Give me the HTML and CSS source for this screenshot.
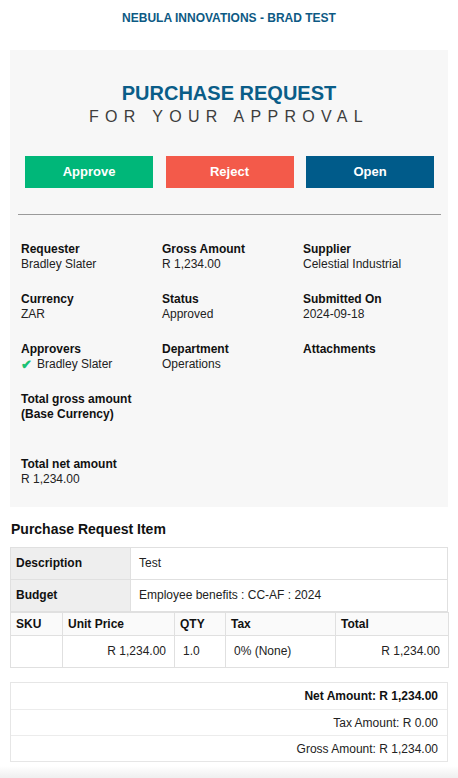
FILE: index.html
```html
<!DOCTYPE html>
<html>
<head>
<meta charset="utf-8">
<link rel="stylesheet" href="styles.css">
</head>
<body>
<div class="page">
  <div class="brand">NEBULA INNOVATIONS - BRAD TEST</div>
  <div class="panel">
    <div class="title">PURCHASE REQUEST</div>
    <div class="subtitle">FOR YOUR APPROVAL</div>
    <div class="actions">
      <a class="btn approve">Approve</a>
      <a class="btn reject">Reject</a>
      <a class="btn open">Open</a>
    </div>
    <hr class="rule">
    <div class="details">
      <div class="field"><div class="label">Requester</div><div class="value">Bradley Slater</div></div>
      <div class="field"><div class="label">Gross Amount</div><div class="value">R 1,234.00</div></div>
      <div class="field"><div class="label">Supplier</div><div class="value">Celestial Industrial</div></div>
      <div class="field"><div class="label">Currency</div><div class="value">ZAR</div></div>
      <div class="field"><div class="label">Status</div><div class="value">Approved</div></div>
      <div class="field"><div class="label">Submitted On</div><div class="value">2024-09-18</div></div>
      <div class="field"><div class="label">Approvers</div><div class="value"><span class="check">✔</span>Bradley Slater</div></div>
      <div class="field"><div class="label">Department</div><div class="value">Operations</div></div>
      <div class="field"><div class="label">Attachments</div><div class="value"></div></div>
      <div class="field"><div class="label">Total gross amount<br>(Base Currency)</div><div class="value"></div></div>
      <div class="field"></div>
      <div class="field"></div>
      <div class="field"><div class="label">Total net amount</div><div class="value">R 1,234.00</div></div>
    </div>
  </div>
  <h2 class="section">Purchase Request Item</h2>
  <table class="info">
    <tr><th>Description</th><td>Test</td></tr>
    <tr><th>Budget</th><td>Employee benefits : CC-AF : 2024</td></tr>
  </table>
  <table class="items">
    <thead>
      <tr><th class="c-sku">SKU</th><th class="c-price">Unit Price</th><th class="c-qty">QTY</th><th class="c-tax">Tax</th><th class="c-total">Total</th></tr>
    </thead>
    <tbody>
      <tr><td></td><td class="num">R 1,234.00</td><td class="qty">1.0</td><td class="tax">0% (None)</td><td class="num">R 1,234.00</td></tr>
    </tbody>
  </table>
  <div class="totals">
    <div class="trow strong">Net Amount: R 1,234.00</div>
    <div class="trow">Tax Amount: R 0.00</div>
    <div class="trow">Gross Amount: R 1,234.00</div>
  </div>
</div>
<div class="fade"></div>
</body>
</html>
```
FILE: styles.css
```css
* { box-sizing: border-box; }
html, body { margin: 0; padding: 0; background: #ffffff; }
body {
  font-family: "Liberation Sans", Arial, Helvetica, sans-serif;
  font-size: 12px;
  line-height: 15px;
  color: #222;
  width: 458px;
}
.page { padding: 0 10px; }
.brand {
  height: 50px;
  padding-top: 11px;
  text-align: center;
  font-weight: bold;
  font-size: 12px;
  line-height: 14px;
  color: #0d5a84;
}
.panel {
  background: #f7f7f7;
  padding: 31px 0 0;
}
.title {
  text-align: center;
  font-weight: bold;
  font-size: 20px;
  line-height: 24px;
  color: #0a5d88;
}
.subtitle {
  text-align: center;
  font-size: 16px;
  line-height: 18px;
  letter-spacing: 6.3px;
  color: #3d3d3d;
  margin-top: 3px;
}
.actions {
  display: flex;
  justify-content: space-between;
  padding: 0 14px 0 15px;
  margin-top: 30px;
}
.btn {
  display: block;
  width: 128px;
  height: 32px;
  line-height: 32px;
  text-align: center;
  color: #fff;
  font-weight: bold;
  font-size: 13px;
}
.approve { background: #00b779; }
.reject { background: #f35a4a; }
.open { background: #005b8a; }
.rule {
  margin: 26px 7px 0 8px;
  border: 0;
  border-top: 1px solid #9a9a9a;
  height: 0;
}
.details {
  display: grid;
  grid-template-columns: 141px 141px 141px;
  padding: 27px 0 0 11px;
}
.field { margin-bottom: 20px; }
.label { font-weight: bold; color: #111; }
.value { height: 15px; color: #222; }
.check {
  display: inline-block;
  width: 16px;
  height: 15px;
  line-height: 15px;
  vertical-align: top;
  color: #1cc274;
  font-size: 13px;
  font-weight: bold;
}
.section {
  margin: 0;
  padding: 12px 0 0 1px;
  height: 40px;
  font-size: 14px;
  line-height: 20px;
  color: #111;
}
table {
  width: 438px;
  border-collapse: collapse;
  table-layout: fixed;
}
.info th, .info td, .items th, .items td {
  border: 1px solid #e0e0e0;
  text-align: left;
  font-size: 12px;
  line-height: 15px;
  vertical-align: middle;
}
.info th {
  width: 120px;
  background: #eeeeee;
  font-weight: bold;
  padding: 8px 5px;
  color: #111;
}
.info td { padding: 8px 8px; background: #fff; }
.items th {
  background: #fafafa;
  font-weight: bold;
  padding: 4px 5px 3px;
  color: #111;
}
.items td { padding: 8px 5px 8px; background: #fff; }
.c-sku { width: 52px; }
.c-price { width: 112px; }
.c-qty { width: 51px; }
.c-tax { width: 110px; }
.c-total { width: 113px; }
.items td.num { text-align: right; padding-right: 8px; }
.items td.qty { padding-left: 8px; }
.items td.tax { padding-left: 8px; }
.totals {
  margin-top: 14px;
  border: 1px solid #e6e6e6;
  background: #fff;
}
.trow {
  height: 26px;
  line-height: 26px;
  text-align: right;
  padding-right: 9px;
  border-top: 1px solid #ececec;
}
.trow:first-child { border-top: 0; }
.strong { font-weight: bold; color: #111; }
.fade {
  height: 20px;
  margin-top: 4px;
  background: linear-gradient(180deg, #ffffff 0%, #efefef 60%, #eaeaea 100%);
}
```
